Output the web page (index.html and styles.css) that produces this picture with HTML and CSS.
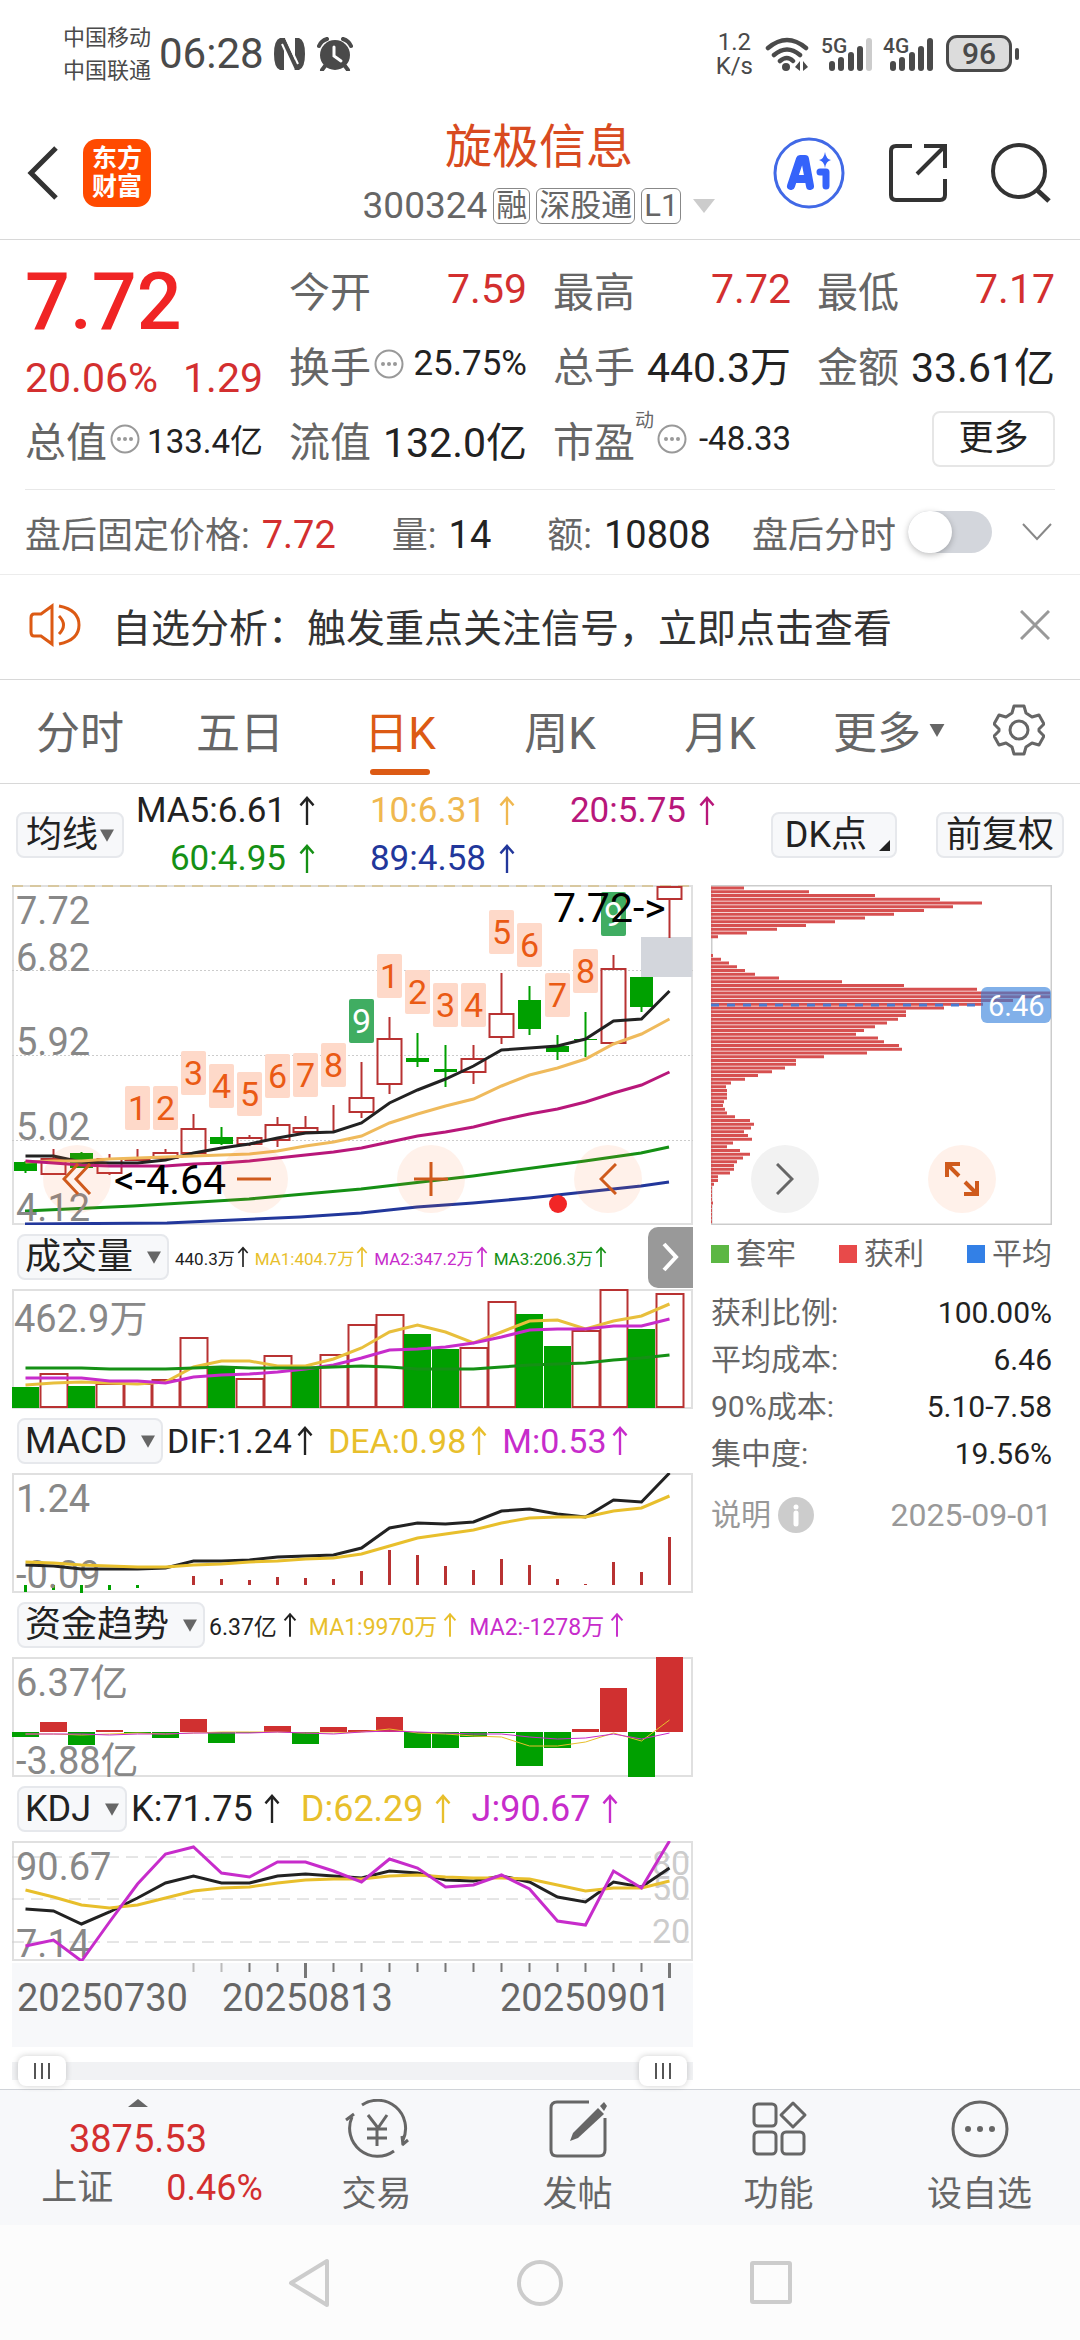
FILE: index.html
```html
<!DOCTYPE html>
<html lang="zh-CN">
<head>
<meta charset="utf-8">
<meta name="viewport" content="width=device-width, initial-scale=1">
<title>旋极信息 300324</title>
<link rel="stylesheet" href="styles.css">
</head>
<body>
<svg class="defs" aria-hidden="true">
  <symbol id="up" viewBox="0 0 18 32"><path d="M9 31V2M2 10l7-8 7 8" fill="none" stroke="currentColor" stroke-width="2.500"/></symbol>
  <symbol id="hint" viewBox="0 0 30 30"><circle cx="15" cy="15" r="13.5" fill="none" stroke="#999" stroke-width="2"/><g fill="#999"><circle cx="9" cy="15" r="2"/><circle cx="15" cy="15" r="2"/><circle cx="21" cy="15" r="2"/></g></symbol>
  <symbol id="down" viewBox="0 0 16 14"><path d="M0 0h16L8 14z" fill="#666"/></symbol>
</svg>

<div class="status">
  <div class="carriers"><span>中国移动</span><span>中国联通</span></div>
  <span class="clock">06:28</span>
  <svg class="nfc" viewBox="0 0 31 32" width="31" height="32"><path d="M6 0H11L21 22V0h4q6 2 6 16t-6 16h-5L10 10v22H6Q0 30 0 16T6 0z" fill="#4a4a4a"/><path d="M12 0l12 26" stroke="#fff" stroke-width="2"/><path d="M8 6l12 26" stroke="#fff" stroke-width="2"/></svg>
  <svg class="alarm" viewBox="0 0 36 34" width="36" height="34"><circle cx="18" cy="18" r="15" fill="#4a4a4a"/><path d="M2 9q2-5 8-7M34 9q-2-5-8-7M8 29l-3 4M28 29l3 4" fill="none" stroke="#4a4a4a" stroke-width="4" stroke-linecap="round"/><path d="M17 10v9l7 5" fill="none" stroke="#fff" stroke-width="3" stroke-linecap="round"/></svg>
  <div class="speed"><span>1.2</span><span>K/s</span></div>
  <svg class="wifi" viewBox="0 0 46 34" width="46" height="34"><g fill="none" stroke="#4a4a4a" stroke-width="4.500" stroke-linecap="round"><path d="M3 11q19-16 38 0M9 18q13-11 26 0M15 24q7-6 13 0"/></g><circle cx="21" cy="30" r="4" fill="#4a4a4a"/><path d="M30 30l5-6v10zM38 24l5 6-5 4z" fill="#4a4a4a"/></svg>
  <svg class="signal" viewBox="0 0 52 36" width="52" height="36"><text x="0" y="17" class="net">5G</text><g fill="#4a4a4a"><rect x="8" y="25" width="6" height="10" rx="3"/><rect x="17" y="21" width="6" height="14" rx="3"/><rect x="27" y="16" width="6" height="19" rx="3"/><rect x="36" y="10" width="6" height="25" rx="3"/></g><rect x="45" y="2" width="6" height="33" rx="3" fill="#ccc"/></svg>
  <svg class="signal" viewBox="0 0 52 36" width="52" height="36"><text x="0" y="17" class="net">4G</text><g fill="#4a4a4a"><rect x="7" y="25" width="6" height="10" rx="3"/><rect x="16" y="21" width="6" height="14" rx="3"/><rect x="26" y="16" width="6" height="19" rx="3"/><rect x="35" y="10" width="6" height="25" rx="3"/><rect x="44" y="2" width="6" height="33" rx="3"/></g></svg>
  <div class="battery"><span>96</span></div>
</div>

<header class="header">
  <div class="header-left">
    <button class="plain" aria-label="返回"><svg viewBox="0 0 32 56" width="32" height="56"><path d="M29 3L4 28l25 25" fill="none" stroke="#333" stroke-width="5"/></svg></button>
    <div class="logo"><span>东方</span><span>财富</span></div>
  </div>
  <div class="title">
    <h1>旋极信息</h1>
    <div class="code"><span>300324</span><span class="tag">融</span><span class="tag">深股通</span><span class="tag">L1</span><svg class="code-arrow" viewBox="0 0 22 14" width="22" height="14"><path d="M0 0h22L11 14z" fill="#ccc"/></svg></div>
  </div>
  <div class="header-right">
    <button class="plain" aria-label="Ai"><svg viewBox="0 0 72 72" width="72" height="72"><circle cx="36" cy="36" r="34" fill="none" stroke="#4169e6" stroke-width="3"/><path d="M18 49l9-27h5l5 27M23 42h11" fill="none" stroke="#3563fa" stroke-width="8" stroke-linecap="round" stroke-linejoin="round"/><path d="M47 35h6v14" fill="none" stroke="#3563fa" stroke-width="7" stroke-linecap="round" stroke-linejoin="round"/><path d="M52 15q1 7 6 8-5 1-6 8-1-7-6-8 5-1 6-8z" fill="#3563fa"/></svg></button>
    <button class="plain" aria-label="分享"><svg viewBox="0 0 60 60" width="60" height="60"><path d="M24 3H8q-5 0-5 5v44q0 5 5 5h44q5 0 5-5V36M36 3h21v22M56 4L29 31" fill="none" stroke="#333" stroke-width="4"/></svg></button>
    <button class="plain" aria-label="搜索"><svg viewBox="0 0 60 60" width="60" height="60"><circle cx="28" cy="28" r="26" fill="none" stroke="#333" stroke-width="4"/><path d="M46 47l12 11" stroke="#333" stroke-width="5"/></svg></button>
  </div>
</header>

<section class="quote">
  <div class="price">
    <strong>7.72</strong>
    <div class="pair red"><span>20.06%</span><span>1.29</span></div>
  </div>
  <div class="pair"><span class="label">今开</span><span class="red">7.59</span></div>
  <div class="pair"><span class="label">最高</span><span class="red">7.72</span></div>
  <div class="pair"><span class="label">最低</span><span class="red">7.17</span></div>
  <div class="pair"><span class="label">换手<svg class="hint"><use href="#hint"/></svg></span><span class="mid">25.75%</span></div>
  <div class="pair"><span class="label">总手</span><span>440.3万</span></div>
  <div class="pair"><span class="label">金额</span><span>33.61亿</span></div>
  <div class="pair"><span class="label">总值<svg class="hint"><use href="#hint"/></svg></span><span class="small">133.4亿</span></div>
  <div class="pair"><span class="label">流值</span><span>132.0亿</span></div>
  <div class="pair"><span class="label">市盈<sup>动</sup><svg class="hint"><use href="#hint"/></svg></span><span class="small">-48.33</span></div>
  <div class="more-cell"><button class="more">更多</button></div>
</section>

<section class="after">
  <span>盘后固定价格:<b class="red">7.72</b></span>
  <span>量:<b>14</b></span>
  <span>额:<b>10808</b></span>
  <label class="switch">盘后分时<input type="checkbox"></label>
  <button class="plain" aria-label="展开"><svg viewBox="0 0 30 18" width="30" height="18"><path d="M1 1l14 15L29 1" fill="none" stroke="#888" stroke-width="2"/></svg></button>
</section>

<section class="notice">
  <svg viewBox="0 0 52 44" width="52" height="44"><g fill="none" stroke="#dc5a14" stroke-width="3"><path d="M23 3v38L12 33H5q-3 0-3-4V15q0-4 3-4h7z"/><path d="M30 13q9 9 0 18M30 3q20 4 20 19T30 41"/></g></svg>
  <p>自选分析：触发重点关注信号，立即点击查看</p>
  <button class="plain" aria-label="关闭"><svg viewBox="0 0 30 30" width="30" height="30"><path d="M1 1l28 28M29 1L1 29" stroke="#999" stroke-width="3"/></svg></button>
</section>

<nav class="tabs">
  <button>分时</button><button>五日</button><button class="active">日K</button><button>周K</button><button>月K</button>
  <button class="tab-more">更多<svg class="down"><use href="#down"/></svg></button>
  <button aria-label="设置"><svg viewBox="0 0 52 52" width="52" height="52"><path d="M21 2h10l2 7 6 4 7-2 5 9-5 5v2l5 5-5 9-7-2-6 4-2 7H21l-2-7-6-4-7 2-5-9 5-5v-2l-5-5 5-9 7 2 6-4z" fill="none" stroke="#666" stroke-width="3" stroke-linejoin="round"/><circle cx="26" cy="26" r="9" fill="none" stroke="#666" stroke-width="3"/></svg></button>
</nav>

<section class="averages">
  <button class="chip">均线<svg class="down"><use href="#down"/></svg></button>
  <div class="ma">
    <span class="ink">MA5:6.61<svg class="up"><use href="#up"/></svg></span>
    <span class="amber">10:6.31<svg class="up"><use href="#up"/></svg></span>
    <span class="plum">20:5.75<svg class="up"><use href="#up"/></svg></span>
    <span class="green">60:4.95<svg class="up"><use href="#up"/></svg></span>
    <span class="navy">89:4.58<svg class="up"><use href="#up"/></svg></span>
  </div>
  <button class="chip corner">DK点<svg viewBox="0 0 11 11" width="11" height="11"><path d="M11 0v11H0z" fill="#222"/></svg></button>
  <button class="chip">前复权</button>
</section>

<main class="board">
  <div class="charts">
    <div class="stage">
      <svg class="chart" id="candles" viewBox="0 0 681 340"></svg>
      <div class="controls">
        <button class="round" aria-label="最早"><svg viewBox="0 0 30 32" width="30" height="32"><path d="M16 1L2 16l14 15M28 1L14 16l14 15" fill="none" stroke="#cf5a1c" stroke-width="3"/></svg></button>
        <button class="round" aria-label="缩小"><svg viewBox="0 0 34 34" width="34" height="34"><path d="M0 17h34" stroke="#cf5a1c" stroke-width="3"/></svg></button>
        <button class="round" aria-label="放大"><svg viewBox="0 0 34 34" width="34" height="34"><path d="M0 17h34M17 0v34" stroke="#cf5a1c" stroke-width="3"/></svg></button>
        <button class="round" aria-label="左移"><svg viewBox="0 0 18 32" width="18" height="32"><path d="M17 1L2 16l15 15" fill="none" stroke="#cf5a1c" stroke-width="3"/></svg></button>
      </div>
    </div>
    <div class="legend tiny">
      <button class="chip">成交量<svg class="down"><use href="#down"/></svg></button>
      <span class="ink">440.3万<svg class="up"><use href="#up"/></svg></span>
      <span class="gold">MA1:404.7万<svg class="up"><use href="#up"/></svg></span>
      <span class="violet">MA2:347.2万<svg class="up"><use href="#up"/></svg></span>
      <span class="green">MA3:206.3万<svg class="up"><use href="#up"/></svg></span>
      <button class="next" aria-label="更多指标"><svg viewBox="0 0 18 30" width="18" height="30"><path d="M2 2l12 13L2 28" fill="none" stroke="#fff" stroke-width="4"/></svg></button>
    </div>
    <svg class="chart" id="volume" viewBox="0 0 681 120"></svg>
    <div class="legend macd">
      <button class="chip">MACD<svg class="down"><use href="#down"/></svg></button>
      <span class="ink">DIF:1.24<svg class="up"><use href="#up"/></svg></span>
      <span class="gold">DEA:0.98<svg class="up"><use href="#up"/></svg></span>
      <span class="violet">M:0.53<svg class="up"><use href="#up"/></svg></span>
    </div>
    <svg class="chart" id="macd" viewBox="0 0 681 120"></svg>
    <div class="legend fund">
      <button class="chip">资金趋势<svg class="down"><use href="#down"/></svg></button>
      <span class="ink">6.37亿<svg class="up"><use href="#up"/></svg></span>
      <span class="gold">MA1:9970万<svg class="up"><use href="#up"/></svg></span>
      <span class="violet">MA2:-1278万<svg class="up"><use href="#up"/></svg></span>
    </div>
    <svg class="chart" id="funds" viewBox="0 0 681 120"></svg>
    <div class="legend kdj">
      <button class="chip">KDJ<svg class="down"><use href="#down"/></svg></button>
      <span class="ink">K:71.75<svg class="up"><use href="#up"/></svg></span>
      <span class="gold">D:62.29<svg class="up"><use href="#up"/></svg></span>
      <span class="violet">J:90.67<svg class="up"><use href="#up"/></svg></span>
    </div>
    <svg class="chart" id="kdj" viewBox="0 0 681 120"></svg>
    <svg class="chart axis" id="axis" viewBox="0 0 681 84"></svg>
    <div class="range">
      <input type="range" aria-label="开始日期" min="0" max="100" value="0">
      <input type="range" aria-label="结束日期" min="0" max="100" value="100">
    </div>
  </div>

  <aside class="chips">
    <div class="stage">
      <svg class="chart" id="cost" viewBox="0 0 341 340"></svg>
      <div class="controls side">
        <button class="round gray" aria-label="右移"><svg viewBox="0 0 18 32" width="18" height="32"><path d="M1 1l15 15L1 31" fill="none" stroke="#666" stroke-width="3"/></svg></button>
        <button class="round" aria-label="全屏"><svg viewBox="0 0 34 34" width="34" height="34"><path d="M2 15V2h13M2 2l12 12M32 19v13H19M32 32L20 20" fill="none" stroke="#cf5a1c" stroke-width="4"/></svg></button>
      </div>
    </div>
    <ul class="keys"><li class="k-green">套牢</li><li class="k-red">获利</li><li class="k-blue">平均</li></ul>
    <dl class="stats">
      <div><dt>获利比例:</dt><dd>100.00%</dd></div>
      <div><dt>平均成本:</dt><dd>6.46</dd></div>
      <div><dt>90%成本:</dt><dd>5.10-7.58</dd></div>
      <div><dt>集中度:</dt><dd>19.56%</dd></div>
    </dl>
    <div class="explain"><span>说明<svg viewBox="0 0 36 36" width="36" height="36"><circle cx="18" cy="18" r="18" fill="#ccc"/><circle cx="18" cy="10" r="2.500" fill="#fff"/><path d="M18 16v11" stroke="#fff" stroke-width="5" stroke-linecap="round"/></svg></span><time>2025-09-01</time></div>
  </aside>
</main>

<footer class="bottom">
  <button class="index">
    <svg viewBox="0 0 20 8" width="20" height="8"><path d="M10 0l10 8H0z" fill="#666"/></svg>
    <span class="points">3875.53</span>
    <span class="index-row"><span>上证</span><span class="red">0.46%</span></span>
  </button>
  <button class="action"><svg viewBox="0 0 66 60" width="66" height="60"><g fill="none" stroke="#666" stroke-width="3"><path d="M18 6a28 28 0 0 1 41 35M50 52A28 28 0 0 1 8 18"/><path d="M2 21l8-6M58 46l6-5M59 46l-1-9M24 16l10 13 9-13M23 30h20M23 39h20M33 29v18"/></g></svg>交易</button>
  <button class="action"><svg viewBox="0 0 60 60" width="60" height="60"><g fill="none" stroke="#666" stroke-width="3"><path d="M41 3H9q-6 0-6 6v42q0 6 6 6h42q6 0 6-6V19"/></g><path d="M50 9l6 6-26 24-8 3 3-8z" fill="#666"/><path d="M52 7l4-4 3 4-3 5z" fill="#666"/></svg>发帖</button>
  <button class="action"><svg viewBox="0 0 60 60" width="60" height="60"><g fill="none" stroke="#666" stroke-width="3"><rect x="5" y="5" width="22" height="22" rx="4"/><rect x="5" y="33" width="22" height="22" rx="4"/><rect x="33" y="33" width="22" height="22" rx="4"/><path d="M44 4l12 12-12 12-12-12z" stroke-linejoin="round"/></g></svg>功能</button>
  <button class="action"><svg viewBox="0 0 60 60" width="60" height="60"><circle cx="30" cy="30" r="27" fill="none" stroke="#666" stroke-width="3"/><g fill="#666"><circle cx="18" cy="30" r="3"/><circle cx="30" cy="30" r="3"/><circle cx="42" cy="30" r="3"/></g></svg>设自选</button>
</footer>

<div class="system">
  <svg viewBox="0 0 46 50" width="46" height="50"><path d="M41 3v44L5 25z" fill="none" stroke="#ccc" stroke-width="4" stroke-linejoin="round"/></svg>
  <svg viewBox="0 0 46 50" width="46" height="50"><circle cx="23" cy="25" r="21" fill="none" stroke="#ccc" stroke-width="4"/></svg>
  <svg viewBox="0 0 46 50" width="46" height="50"><rect x="4" y="5" width="38" height="39" rx="1" fill="none" stroke="#ccc" stroke-width="4"/></svg>
</div>
<script src="charts.js"></script>
</body>
</html>
```
FILE: styles.css
```css
* { box-sizing: border-box; }
body { margin: 0; background: #fff; color: #222; font-family: Roboto, "Noto Sans CJK SC", sans-serif; font-size: 36px; }
button { font: inherit; color: inherit; border: 0; background: none; padding: 0; margin: 0; }
svg { flex: none; display: block; }
h1, p, dl, dd, ul { margin: 0; padding: 0; }
.defs { position: absolute; width: 0; height: 0; }
.plain { display: flex; align-items: center; }

.red { color: #d32f2f; }
.ink { color: #222; }
.amber { color: #f0b850; }
.gold { color: #e8bf2c; }
.plum { color: #b8177a; }
.violet { color: #c72ccb; }
.green { color: #159015; }
.navy { color: #22379b; }

.status { display: flex; align-items: center; min-height: 107px; padding: 0 68px 0 63px; color: #4a4a4a; }
.carriers { display: flex; flex-direction: column; font-size: 22px; line-height: 33px; }
.clock { margin-left: 8px; font-size: 42px; }
.nfc { margin-left: 10px; }
.alarm { margin-left: 12px; }
.speed { display: flex; flex-direction: column; align-items: center; margin-left: auto; font-size: 24px; line-height: 24px; }
.wifi { margin-left: 12px; }
.signal { margin-left: 10px; overflow: visible; }
.net { font-size: 21px; font-weight: 500; fill: #4a4a4a; }
.battery { position: relative; width: 66px; margin-left: 11px; border: 3px solid #4a4a4a; border-radius: 11px; background: #dcdcdc; text-align: center; font-size: 30px; font-weight: 500; line-height: 31px; }
.battery::after { content: ""; position: absolute; right: -10px; top: 10px; width: 4px; height: 12px; border-radius: 2px; background: #4a4a4a; }

.header { display: grid; grid-template-columns: 1fr auto 1fr; align-items: center; padding: 0 29px 0 27px; border-bottom: 1px solid #d8d8d8; }
.header-left { display: flex; align-items: center; gap: 24px; }
.logo { display: flex; flex-direction: column; justify-content: center; align-items: center; width: 68px; height: 68px; border-radius: 14px; background: #ff4a00; color: #fff; font-size: 25px; font-weight: 700; line-height: 28px; }
.title { padding-top: 14px; text-align: center; }
.title h1 { font-size: 47px; font-weight: 400; line-height: 52px; color: #d84a20; }
.code { display: flex; align-items: center; justify-content: center; gap: 6px; line-height: 66px; font-size: 37px; color: #666; }
.tag { padding: 0 2px; border: 1px solid #888; border-radius: 6px; font-size: 31px; line-height: 34px; }
.code-arrow { margin-left: 6px; }
.header-right { display: flex; align-items: center; justify-content: flex-end; gap: 43px; }

.quote { display: grid; grid-template-columns: repeat(4, minmax(0, 1fr)); column-gap: 26px; grid-auto-rows: 75px; margin: 0 25px; padding: 11px 0 13px; border-bottom: 1px solid #e8e8e8; font-size: 41px; }
.pair { display: flex; align-items: center; justify-content: space-between; white-space: nowrap; }
.label { display: flex; align-items: center; color: #666; }
.label sup { align-self: flex-start; font-size: 19px; line-height: 24px; }
.hint { width: 30px; height: 30px; margin-left: 3px; }
.mid { font-size: 35px; }
.small { font-size: 33px; }
.price { grid-row: span 2; }
.price strong { display: block; font-size: 79px; font-weight: 500; line-height: 102px; color: #f02424; }
.price .pair { line-height: 50px; }
.more-cell { display: flex; align-items: center; justify-content: flex-end; }
.more { width: 123px; border: 2px solid #e6e6e6; border-radius: 8px; font-size: 35px; line-height: 52px; }

.after { display: flex; align-items: center; min-height: 85px; padding: 0 28px 0 25px; border-bottom: 1px solid #ececec; color: #666; white-space: nowrap; }
.after span + span { margin-left: 56px; }
.after b { margin-left: 12px; font-weight: 400; font-size: 38px; color: #222; }
.after b.red { color: #d32f2f; }
.switch { display: flex; align-items: center; gap: 12px; margin: 0 30px 0 auto; }
.switch input { appearance: none; position: relative; width: 84px; height: 42px; margin: 0; border-radius: 21px; background: #d3d6dc; }
.switch input::before { content: ""; position: absolute; left: 0; top: 0; width: 44px; height: 42px; border-radius: 21px; background: #fff; box-shadow: 0 2px 6px rgba(0, 0, 0, .25); }

.notice { display: flex; align-items: center; min-height: 105px; padding: 0 30px 4px 29px; border-bottom: 1px solid #d8d8d8; }
.notice p { flex: 1; margin-left: 31px; font-size: 39px; color: #333; }

.tabs { display: grid; grid-template-columns: repeat(5, 160fr) 178fr 82fr; padding-right: 20px; min-height: 104px; border-bottom: 1px solid #d8d8d8; font-size: 44px; color: #666; }
.tabs button { display: flex; align-items: center; justify-content: center; padding-bottom: 3px; }
.tabs .active { position: relative; color: #dc5a14; }
.active::after { content: ""; position: absolute; left: 50%; bottom: 8px; width: 60px; height: 6px; margin-left: -30px; border-radius: 3px; background: #dc5a14; }
.down { width: 16px; height: 13px; }
.tab-more .down { margin-left: 8px; }

.averages { display: flex; align-items: center; padding: 3px 16px 2px; font-size: 35px; }
.chip { display: flex; align-items: center; justify-content: center; height: 46px; padding: 0 6px; border: 2px solid #e6e8ec; border-radius: 8px; background: #f7f8fa; font-size: 36px; line-height: 42px; color: #222; white-space: nowrap; }
.averages > .chip { padding: 0 8px; }
.averages .down { margin-left: 2px; width: 14px; }
.ma { display: grid; grid-template-columns: 192px 200px 200px; margin-right: auto; }
.ma span { display: flex; align-items: center; justify-content: flex-end; line-height: 48px; }
.up { width: 18px; height: 30px; margin-left: 12px; }
.averages > .corner { margin-right: 39px; padding: 0 5px 0 12px; }
.corner svg { align-self: flex-end; margin: 0 0 5px 12px; }

.board { display: grid; grid-template-columns: minmax(0, 681fr) minmax(0, 341fr); column-gap: 18px; align-items: start; padding: 0 28px 0 12px; }
.stage { position: relative; }
.chart { width: 100%; height: auto; overflow: hidden; }
.chart text { font-size: 38px; }
.chart .ink { font-size: 41px; }
.chart .scale { fill: #888; }
.chart .faint { fill: #ccc; font-size: 34px; }
.chart .badge { font-size: 34px; text-anchor: middle; }
.chart .average { font-size: 29px; fill: #fff; }
.controls { position: absolute; left: 31px; right: 51px; bottom: 12px; display: flex; justify-content: space-between; }
.controls.side { left: 40px; right: 56px; }
.round { display: flex; align-items: center; justify-content: center; width: 68px; height: 68px; border-radius: 50%; background: rgba(255, 120, 50, .1); }
.round.gray { background: #f2f2f2; }

.legend { display: flex; align-items: center; height: 64px; padding-left: 5px; white-space: nowrap; }
.legend span { display: flex; align-items: center; }
.legend .down { margin-left: 14px; width: 14px; }
.legend .chip { margin-right: 4px; }
.tiny { gap: 6px; font-size: 17px; }
.tiny .up { width: 12px; height: 28px; margin-left: 2px; }
.tiny .chip { margin-right: 0; }
.next { display: flex; align-items: center; justify-content: center; width: 45px; height: 61px; margin-left: auto; border-radius: 10px 0 0 10px; background: #999; }
.macd { font-size: 34px; }
.macd .up { margin: 0 14px 0 4px; }
.fund { font-size: 23px; }
.fund .up { width: 14px; margin: 0 12px 0 6px; }
.kdj .up { margin: 0 20px 0 10px; }

.axis { margin-top: 2px; background: #f7f8fa; }
.axis text { fill: #666; }
.range { display: grid; align-items: center; margin: 8px 0 2px; height: 32px; background: linear-gradient(#f1f2f4, #f1f2f4) 0 50% / 100% 18px no-repeat; }
.range input { grid-area: 1 / 1; appearance: none; height: 30px; margin: 0 6px; background: none; pointer-events: none; }
.range input::-webkit-slider-thumb { appearance: none; pointer-events: auto; width: 48px; height: 30px; border-radius: 8px; box-shadow: 0 0 6px rgba(0, 0, 0, .2); background: linear-gradient(#555, #555) 16px 7px / 2px 16px no-repeat, linear-gradient(#555, #555) 23px 7px / 2px 16px no-repeat, linear-gradient(#555, #555) 30px 7px / 2px 16px no-repeat, #fff; }

.chips { font-size: 30px; color: #666; }
.keys { display: flex; justify-content: space-between; list-style: none; line-height: 58px; }
.keys li { display: flex; align-items: center; gap: 7px; }
.keys li::before { content: ""; width: 18px; height: 18px; background: #5cb744; }
.keys .k-red::before { background: #e84a4a; }
.keys .k-blue::before { background: #3380e6; }
.stats { padding-top: 6px; }
.stats div { display: flex; justify-content: space-between; line-height: 47px; }
.stats dd { color: #222; }
.explain { display: flex; align-items: center; justify-content: space-between; padding-top: 14px; line-height: 48px; color: #999; }
.explain span { display: flex; align-items: center; gap: 7px; }
.explain time { font-size: 32px; }

.bottom { display: grid; grid-template-columns: 276fr repeat(4, 201fr); border-top: 1px solid #d0d3d8; background: #f7f8fa; color: #666; font-size: 35px; }
.bottom button { display: flex; flex-direction: column; align-items: center; padding: 9px 0 2px; line-height: 56px; }
.bottom .action { gap: 8px; }
.bottom .index { padding-bottom: 8px; line-height: 49px; }
.points { margin-top: 8px; font-size: 38px; color: #d32f2f; }
.index-row { display: flex; gap: 53px; margin-left: 28px; font-size: 36px; }

.system { display: flex; align-items: center; justify-content: center; gap: 185px; min-height: 116px; background: #fcfcfc; }
```
FILE: charts.js
```js
const RED = '#b83232', GREEN = '#00a000', STEP = 28, FIRST = 13.5;
const x = i => FIRST + STEP * i;
const put = (id, html) => { document.getElementById(id).innerHTML = html; };
const line = (ys, color, w = 3) =>
  `<polyline points="${ys.map((y, i) => x(i) + ',' + y).join(' ')}" fill="none" stroke="${color}" stroke-width="${w}"/>`;
const path = (d, color, w = 2, extra = '') => `<path d="${d}" fill="none" stroke="${color}" stroke-width="${w}" ${extra}/>`;
const rect = (l, t, w, h, fill, extra = '') => `<rect x="${l}" y="${t}" width="${w}" height="${h}" fill="${fill}" ${extra}/>`;
const text = (l, t, s, cls = 'scale', extra = '') => `<text x="${l}" y="${t}" class="${cls}" ${extra}>${s}</text>`;
const frame = h => rect(1, 1, 679, h - 2, 'none', 'stroke="#e0e0e0" stroke-width="2"');

// Daily candles: [up, high, body top, body bottom, low]
const candles = [
  [0,276,277,286,288],[1,264,274,289,289],[0,267,268,283,283],[1,269,274,288,290],[1,264,274,275,275],[1,264,268,273,273],
  [1,229,244,268,268],[0,242,252,259,260],[1,250,253,259,261],[1,232,240,255,262],[1,231,243,247,247],[1,220,239,239,246],
  [1,177,213,227,233],[1,132,154,199,209],[0,148,173,177,182],[0,160,184,187,202],[1,160,174,187,199],[1,88,129,152,159],
  [0,101,115,144,150],[0,150,161,167,175],[0,127,154,155,172],[1,70,84,158,158],[0,92,92,122,127],[1,2,2,14,53]];
const badges = [[4,1,201],[5,2,201],[6,3,166],[7,4,179],[8,5,187],[9,6,169],[10,7,168],[11,8,158],[12,9,114],
  [13,1,69],[14,2,85],[15,3,98],[16,4,98],[17,5,25],[18,6,38],[19,7,88],[20,8,64],[21,9,7]];
put('candles',
  frame(340) + path('M0 1H681', '#d8c8a0', 2, 'stroke-dasharray="11 7"') +
  path('M0 85.500H681M0 170.500H681M0 255.500H681', '#ccc', 1, 'stroke-dasharray="2 2"') +
  rect(629, 52, 51, 40, '#d3d6dc') +
  candles.map(([up, hi, t, b, lo], i) => {
    const c = up ? RED : GREEN, m = x(i);
    return path(`M${m} ${hi}V${t}M${m} ${b}V${lo}`, c) +
      (up ? rect(m - 12, t, 24, b - t, 'none', `stroke="${c}" stroke-width="2"`) : rect(m - 11.5, t, 23, b - t, c));
  }).join('') +
  line([271,271,277,278,278,275,268,263,259,253,248,247,238,218,205,194,181,165,163,161,154,136,134,106], '#222') +
  line([277,276,276,274,273,272,271,270,269,266,261,257,251,238,229,221,214,201,190,183,174,159,149,134], '#efba5c') +
  line([276,278,280,281,281,281,279,278,276,273,270,267,263,257,251,247,242,235,229,224,217,208,200,187], '#b8177a') +
  path('M13 326L121 321 237 314 349 304 461 291 573 276 629 268 657 262', '#159015', 3) +
  path('M13 339L155 338 288 332 349 328 405 322 461 318 517 313 573 307 629 301 657 297', '#22379b', 3) +
  badges.map(([i, n, t]) => rect(x(i) - 12.5, t, 25, 44, n === 9 ? '#40ad62' : '#fed9c9', 'rx="2"') +
    text(x(i), t + 34, n, 'badge', `fill="${n === 9 ? '#fff' : '#ea5a14'}"`)).join('') +
  [['7.72',39],['6.82',86],['5.92',170],['5.02',255],['4.12',336]].map(([s, y]) => text(4, y, s)).join('') +
  text(102, 309, '&lt;-4.64', 'ink') + text(541, 37, '7.72-&gt;', 'ink') +
  '<circle cx="546" cy="319" r="9" fill="#f22626"/>');

const upDays = '010111101101110011001101';
const volume = [98,85,97,95,95,91,49,77,90,67,79,66,36,26,45,60,59,13,25,57,42,1,40,5];
put('volume', frame(120) +
  volume.map((t, i) => upDays[i] === '1' ? rect(x(i) - 13, t, 27, 118 - t, '#fff', `stroke="${RED}" stroke-width="2"`)
    : rect(x(i) - 13.5, t, 27, 119 - t, GREEN)).join('') +
  line([96,94,93,94,95,93,78,72,72,77,77,70,59,43,36,43,54,43,32,31,40,32,27,15], '#e8bf3c') +
  line([89,89,89,92,92,94,88,86,85,83,80,76,69,61,60,58,54,48,41,40,40,37,37,30], '#c72ccb') +
  line([79,79,79,80,80,80,79,78,79,79,79,78,77,78,80,80,80,78,76,75,74,71,69,66], '#159015') +
  text(2, 43, '462.9万'));

const hist = [119,117,120,117,115,112,103,106,107,104,105,106,98,77,82,93,97,86,92,106,111,89,99,64];
put('macd', frame(120) +
  hist.map((y, i) => path(`M${x(i)} 112V${y}`, y > 112 ? GREEN : RED, 3)).join('') +
  text(4, 39, '1.24') + text(4, 115, '-0.09') +
  line([92,93,96,96,96,95,88,88,87,84,83,82,75,55,50,51,49,38,36,41,44,27,29,0], '#222') +
  line([89,90,92,93,94,94,92,91,89,88,86,85,81,73,65,61,57,50,45,44,44,38,35,23], '#e8bf2c'));

const funds = [80,65,88,73,76,81,62,86,76,69,87,70,73,60,91,91,80,76,109,91,72,31,120,0];
put('funds', frame(120) +
  funds.map((y, i) => y < 75 ? rect(x(i) - 13.5, y, 27, 75 - y, '#d03030') : rect(x(i) - 13.5, 75, 27, y - 75, GREEN)).join('') +
  line([77,77,78,77,76,77,76,75,75,75,76,76,75,72,76,77,79,80,89,89,85,76,84,63], '#e8bf2c', 1) +
  line([77,77,77,78,77,77,76,76,76,75,76,77,75,74,75,76,77,77,80,82,81,77,82,76], '#c72ccb', 1) +
  text(4, 39, '6.37亿') + text(4, 117, '-3.88亿'));

put('kdj', frame(120) +
  path('M0 16H681M0 58H681M0 101H681', '#ccc', 1, 'stroke-dasharray="12 7"') +
  text(640, 34, '80', 'faint') + text(640, 59, '50', 'faint') + text(640, 102, '20', 'faint') +
  text(4, 39, '90.67') + text(4, 116, '7.14') +
  line([68,70,83,71,57,42,35,42,42,35,33,35,37,30,32,39,40,35,41,56,61,41,46,27], '#222') +
  line([49,56,64,67,64,57,50,47,46,42,39,38,38,35,34,36,37,37,38,44,50,47,47,40], '#e8bf2c') +
  line([105,99,120,81,43,13,6,32,36,21,21,30,41,18,27,46,44,34,48,80,84,30,47,0], '#c72ccb'));

let ticks = '';
for (let i = 6; i < 24; i++) {
  const major = i === 10 || i === 23;
  ticks += path(`M${x(i)} 0V${major ? 15 : 9}`, i < 8 ? '#bbb' : '#777', major ? 3 : 2);
}
put('axis', ticks + text(5, 48, '20250730', '') + text(210, 48, '20250813', '') + text(488, 48, '20250901', ''));

// Holding cost distribution, one bar length per price level
const cost = [33,98,164,229,271,242,213,183,154,124,95,66,36,7,0,0,0,0,2,10,18,26,34,44,68,131,193,266,339,339,302,272,
  233,195,195,187,176,164,153,145,167,173,188,191,156,113,85,85,74,61,47,34,20,15,16,16,16,13,12,14,16,24,39,43,40,33,37,
  41,22,16,29,39,32,26,23,23,19,7,7,3,1,1,1,1,2,1,1,1,1,1];
put('cost',
  rect(.5, .5, 340, 339, 'none', 'stroke="#ccc" stroke-width="2"') +
  cost.map((w, i) => w ? rect(0, 1.5 + i * 3.75, w, 3, '#d65050') : '').join('') +
  path('M0 120H272', '#4a7ad0', 3, 'stroke-dasharray="8 8"') +
  rect(270, 102, 70, 36, '#3380dc', 'rx="6" fill-opacity=".62"') +
  text(277, 131, '6.46', 'average'));
```
